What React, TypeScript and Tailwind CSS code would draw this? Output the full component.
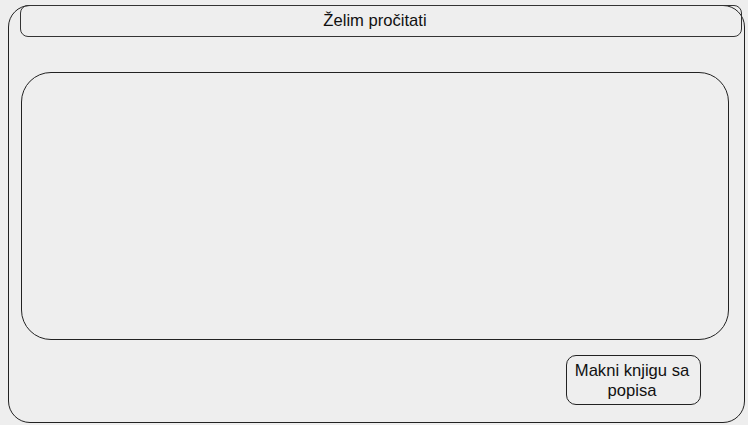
export default function App() {
	return (
		<div className="w-[748px] h-[425px] bg-[#eeeeee] pt-[5px] pl-[8px] font-['Liberation_Sans',Arial,sans-serif] text-[#111]">
			<div className="w-[737px] h-[418px] border-[1.5px] border-[#222] rounded-[22px] flex flex-col pl-[11px] pr-[2px]">
				<div className="h-[32px] border-[1.5px] border-[#333] rounded-[8px] flex items-center justify-center text-[16.6px] -mt-[1px] pr-[12px]">
					Želim pročitati
				</div>
				<div className="mt-[35px] w-[708px] h-[268px] ml-[1px] border-[1.5px] border-[#222] rounded-[30px]" />
				<div className="flex justify-end pr-[41px] mt-[15px]">
					<button className="w-[135px] h-[50px] border-[1.5px] border-[#222] rounded-[10px] text-[16.6px] leading-[20px] text-center pt-[2px] pr-[3px]">
						Makni knjigu sa
						<br />
						popisa
					</button>
				</div>
			</div>
		</div>
	);
}
